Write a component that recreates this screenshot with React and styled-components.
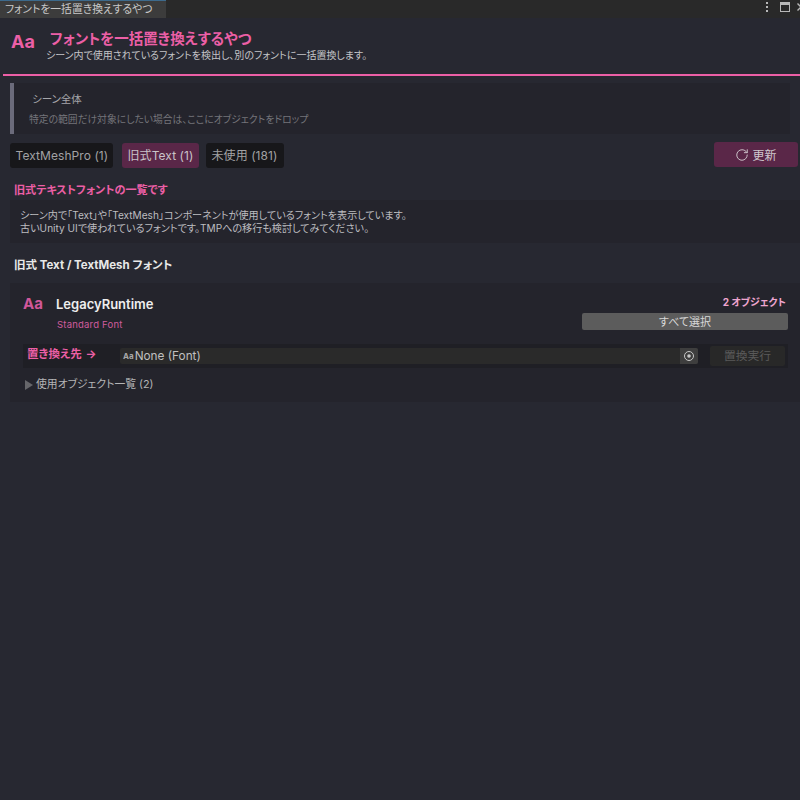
import { createGlobalStyle, styled } from "styled-components";
import { RotateCw } from "lucide-react";

const Global = createGlobalStyle`
  html, body {
    margin: 0;
    padding: 0;
    background: #272831;
  }
  body {
    font-family: Inter, "Noto Sans CJK JP", sans-serif;
    font-feature-settings: "palt";
    overflow: hidden;
  }
  * {
    box-sizing: border-box;
  }
`;

const pink = "#ec5fa6";

const Page = styled.div`
  width: 800px;
  height: 800px;
  overflow: hidden;
  background: #272831;
`;
const TabBar = styled.div`
  height: 18px;
  background: #292929;
  display: flex;
  justify-content: space-between;
`;
const WindowTab = styled.div`
  width: 166px;
  height: 18px;
  background: #3c3c3c;
  border-top: 1px solid #3d6a8c;
  color: #c8c8c8;
  font-size: 10.8px;
  line-height: 17px;
  padding-left: 5px;
  white-space: nowrap;
`;
const WindowIcons = styled.div`
  display: flex;
  align-items: flex-start;
  gap: 7px;
  padding-top: 2px;
  margin-right: -5px;
`;
const DotsIcon = styled.svg`
  margin-right: 4px;
`;
const Header = styled.div`
  height: 58px;
  margin-left: 3px;
  border-bottom: 2px solid ${pink};
  display: flex;
  padding: 12px 0 0 8px;
  gap: 12px;
`;
const HeaderMark = styled.div`
  color: ${pink};
  font-size: 18px;
  font-weight: 700;
  line-height: 24px;
  width: 26px;
`;
const HeaderTitle = styled.div`
  color: ${pink};
  font-size: 14.5px;
  font-weight: 700;
  line-height: 18px;
  margin-left: 1px;
`;
const HeaderSub = styled.div`
  color: #c4c4c8;
  font-size: 10px;
  line-height: 15px;
  margin-left: -3px;
`;
const ScopeBox = styled.div`
  height: 51px;
  margin: 7px 10px 0 10px;
  background: #24242c;
  border-left: 4px solid #6b6b7b;
  padding: 8px 0 0 15px;
`;
const ScopeTitle = styled.div`
  color: #a6a6aa;
  font-size: 10.5px;
  line-height: 18px;
  margin-left: 3px;
`;
const ScopeHint = styled.div`
  color: #74747a;
  font-size: 9.8px;
  line-height: 20px;
  margin-top: 1px;
`;
const Toolbar = styled.div`
  display: flex;
  align-items: flex-start;
  margin: 9px 2px 0 10px;
`;
const FilterTab = styled.div`
  height: 25px;
  width: ${(props) => props.$width}px;
  margin-right: ${(props) => props.$gap}px;
  padding-left: 5.5px;
  border-radius: 3px;
  font-size: 12px;
  line-height: 25px;
  letter-spacing: 0.07px;
  white-space: nowrap;
  background: ${(props) => (props.$active ? "#5a2748" : "#17171a")};
  color: ${(props) => (props.$active ? "#c9c3c8" : "#a2a2a4")};
`;
const RefreshButton = styled.div`
  margin-left: auto;
  margin-top: -1px;
  width: 84px;
  height: 25px;
  border-radius: 3px;
  background: #5a2748;
  color: #d0c8ce;
  font-size: 12px;
  display: flex;
  align-items: center;
  justify-content: center;
  gap: 3px;
`;
const SectionLabel = styled.div`
  color: ${pink};
  font-size: 11.1px;
  font-weight: 700;
  line-height: 16px;
  margin: 14px 0 0 14px;
`;
const InfoBox = styled.div`
  height: 43px;
  margin: 2px 0 0 10px;
  background: #24242c;
  color: #bdbdc0;
  font-size: 10.1px;
  line-height: 13px;
  padding: 9px 0 0 10px;
  white-space: nowrap;
`;
const ListHeading = styled.div`
  color: #e8e8e8;
  font-size: 11.5px;
  font-weight: 700;
  line-height: 16px;
  margin: 14px 0 0 14px;
`;
const FontCard = styled.div`
  height: 119px;
  margin: 10px 0 0 10px;
  background: #24242c;
  padding: 9px 12px 0 12px;
`;
const CardTop = styled.div`
  height: 52px;
  display: flex;
`;
const CardMark = styled.div`
  width: 33px;
  color: #d0579a;
  font-size: 15px;
  font-weight: 700;
  line-height: 24px;
  margin-left: 1px;
`;
const FontName = styled.div`
  color: #eeeeee;
  font-size: 13px;
  font-weight: 600;
  line-height: 24px;
`;
const FontKind = styled.div`
  color: #d05c9e;
  font-size: 9.5px;
  line-height: 14px;
  margin: 2px 0 0 1px;
  letter-spacing: 0.2px;
`;
const CardRight = styled.div`
  margin-left: auto;
  width: 206px;
  display: flex;
  flex-direction: column;
  align-items: flex-end;
`;
const ObjectCount = styled.div`
  color: #efa6d0;
  font-size: 10px;
  font-weight: 700;
  line-height: 18px;
  margin: 1px 2px 0 0;
`;
const SelectAll = styled.div`
  width: 206px;
  height: 17px;
  margin-top: 2px;
  border-radius: 2px;
  background: #5c5c5c;
  color: #d8d8d8;
  font-size: 11px;
  line-height: 18px;
  text-align: center;
`;
const ReplaceRow = styled.div`
  height: 24px;
  margin-left: 1px;
  background: #1f1f25;
  display: flex;
  align-items: center;
`;
const ReplaceLabel = styled.div`
  width: 97px;
  padding-left: 4px;
  color: ${pink};
  font-size: 11.5px;
  font-weight: 700;
  line-height: 16px;
  margin-top: -4px;
  word-spacing: 1px;
`;
const FontField = styled.div`
  width: 578px;
  height: 16px;
  background: #2a2a2a;
  border-radius: 2px;
  color: #c0c0c0;
  font-size: 11.8px;
  line-height: 16px;
  display: flex;
  align-items: center;
  padding-left: 3px;
`;
const FieldIcon = styled.span`
  font-size: 8px;
  font-weight: 700;
  color: #a8a8a8;
  margin-right: 1px;
`;
const FieldPicker = styled.span`
  margin-left: auto;
  width: 18px;
  height: 16px;
  background: #3e3e3e;
  border-radius: 0 2px 2px 0;
  display: flex;
  align-items: center;
  justify-content: center;
`;
const ReplaceButton = styled.div`
  width: 75px;
  height: 20px;
  margin-left: 12px;
  background: #282828;
  border-radius: 2px;
  color: #5a5a5a;
  font-size: 11.8px;
  line-height: 20px;
  text-align: center;
`;
const Foldout = styled.div`
  display: flex;
  align-items: center;
  margin: 9px 0 0 3px;
  color: #b4b4b6;
  font-size: 10.8px;
  line-height: 16px;
`;
const Arrow = styled.span`
  width: 0;
  height: 0;
  margin-right: 3px;
  border-left: 8px solid #66666a;
  border-top: 5px solid transparent;
  border-bottom: 5px solid transparent;
`;

const App = () => {
  return (
    <Page>
      <Global />
      <TabBar>
        <WindowTab>フォントを一括置き換えするやつ</WindowTab>
        <WindowIcons>
          <DotsIcon width="4" height="10" viewBox="0 0 4 10">
            <rect x="1" y="0" width="2" height="2" fill="#b8b8b8" />
            <rect x="1" y="4" width="2" height="2" fill="#b8b8b8" />
            <rect x="1" y="8" width="2" height="2" fill="#b8b8b8" />
          </DotsIcon>
          <svg width="10" height="10" viewBox="0 0 10 10">
            <rect x="0.5" y="0.5" width="9" height="9" fill="none" stroke="#b8b8b8" />
            <rect x="0" y="0" width="10" height="3" fill="#b8b8b8" />
          </svg>
          <svg width="8" height="10" viewBox="0 0 8 10">
            <path d="M0.5 1.5 L7.5 8.5 M7.5 1.5 L0.5 8.5" stroke="#b8b8b8" strokeWidth="1.4" />
          </svg>
        </WindowIcons>
      </TabBar>
      <Header>
        <HeaderMark>Aa</HeaderMark>
        <div>
          <HeaderTitle>フォントを一括置き換えするやつ</HeaderTitle>
          <HeaderSub>シーン内で使用されているフォントを検出し、別のフォントに一括置換します。</HeaderSub>
        </div>
      </Header>
      <ScopeBox>
        <ScopeTitle>シーン全体</ScopeTitle>
        <ScopeHint>特定の範囲だけ対象にしたい場合は、ここにオブジェクトをドロップ</ScopeHint>
      </ScopeBox>
      <Toolbar>
        <FilterTab $width={103} $gap={9}>TextMeshPro (1)</FilterTab>
        <FilterTab $width={77} $gap={7} $active>旧式Text (1)</FilterTab>
        <FilterTab $width={78} $gap={0}>未使用 (181)</FilterTab>
        <RefreshButton>
          <RotateCw size={14} strokeWidth={1.6} />
          更新
        </RefreshButton>
      </Toolbar>
      <SectionLabel>旧式テキストフォントの一覧です</SectionLabel>
      <InfoBox>
        シーン内で「Text」や「TextMesh」コンポーネントが使用しているフォントを表示しています。
        <br />
        古いUnity UIで使われているフォントです。TMPへの移行も検討してみてください。
      </InfoBox>
      <ListHeading>旧式 Text / TextMesh フォント</ListHeading>
      <FontCard>
        <CardTop>
          <CardMark>Aa</CardMark>
          <div>
            <FontName>LegacyRuntime</FontName>
            <FontKind>Standard Font</FontKind>
          </div>
          <CardRight>
            <ObjectCount>2 オブジェクト</ObjectCount>
            <SelectAll>すべて選択</SelectAll>
          </CardRight>
        </CardTop>
        <ReplaceRow>
          <ReplaceLabel>置き換え先 →</ReplaceLabel>
          <FontField>
            <FieldIcon>Aa</FieldIcon>
            None (Font)
            <FieldPicker>
              <svg width="12" height="12" viewBox="0 0 12 12">
                <circle cx="6" cy="6" r="4.5" fill="none" stroke="#c8c8c8" strokeWidth="1" />
                <circle cx="6" cy="6" r="1.8" fill="#c8c8c8" />
              </svg>
            </FieldPicker>
          </FontField>
          <ReplaceButton>置換実行</ReplaceButton>
        </ReplaceRow>
        <Foldout>
          <Arrow />
          使用オブジェクト一覧 (2)
        </Foldout>
      </FontCard>
    </Page>
  );
};

export default App;
